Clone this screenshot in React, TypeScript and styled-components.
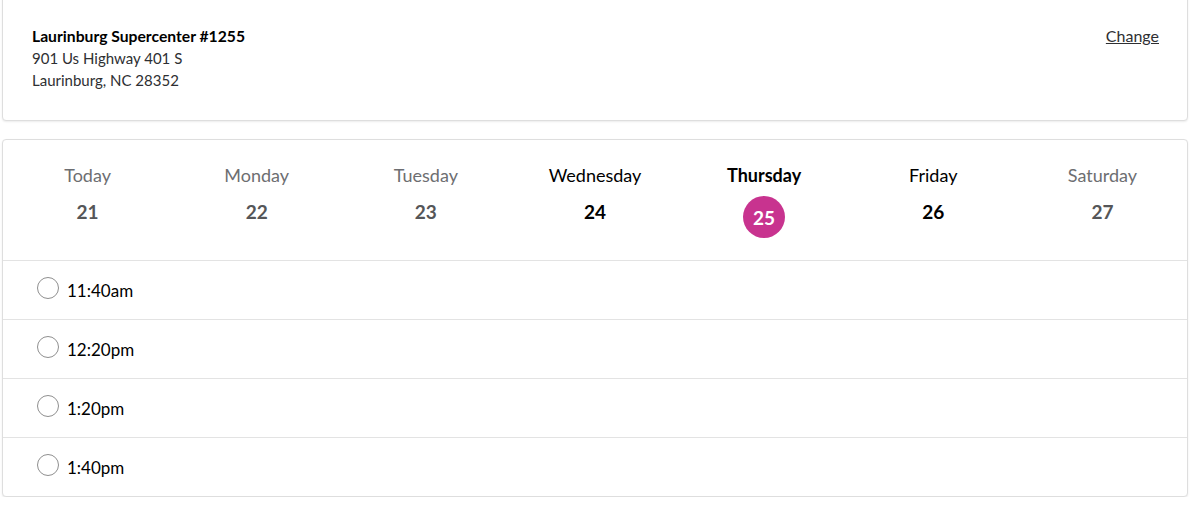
import React from 'react';
import styled, { createGlobalStyle } from 'styled-components';

const GlobalStyle = createGlobalStyle`
  body {
    margin: 0;
    background: #ffffff;
    font-family: Lato, "Noto Sans", sans-serif;
    color: #2e2f32;
  }
`;

const Page = styled.div`
  padding: 0 12px 0 2px;
  display: flex;
  flex-direction: column;
  gap: 18px;
`;

const Card = styled.section`
  background: #fff;
  border: 1px solid #dedede;
  border-radius: 4px;
  box-shadow: 0 1px 2px rgba(0, 0, 0, 0.08);
`;

const StoreCard = styled(Card)`
  margin-top: -8px;
  padding: 32px 28px 29px 29px;
  display: flex;
  justify-content: space-between;
  align-items: flex-start;
`;

const StoreName = styled.div`
  font-weight: 700;
  font-size: 15.7px;
  line-height: 22px;
  color: #000;
`;

const AddressLine = styled.div`
  font-size: 15px;
  line-height: 22px;
  color: #2e2f32;
`;

const ChangeLink = styled.a`
  font-size: 16px;
  line-height: 22px;
  color: #2e2f32;
  text-decoration: underline;
  cursor: pointer;
`;

const DayRow = styled.div`
  display: grid;
  grid-template-columns: repeat(7, 1fr);
  height: 120px;
  border-bottom: 1px solid #e3e3e3;
`;

const DayCell = styled.div`
  display: flex;
  flex-direction: column;
  align-items: center;
  padding-top: 23px;
`;

const DayName = styled.div<{ $state: 'off' | 'on' | 'sel' }>`
  font-size: 18px;
  line-height: 24px;
  font-weight: ${(p) => (p.$state === 'sel' ? 700 : 400)};
  color: ${(p) => (p.$state === 'off' ? '#6d6e71' : '#000')};
`;

const DayNum = styled.div<{ $state: 'off' | 'on' | 'sel' }>`
  margin-top: ${(p) => (p.$state === 'sel' ? '9px' : '13px')};
  width: 42px;
  height: 42px;
  display: flex;
  align-items: ${(p) => (p.$state === 'sel' ? 'center' : 'flex-start')};
  justify-content: center;
  border-radius: 50%;
  font-size: 19px;
  font-weight: 700;
  background: ${(p) => (p.$state === 'sel' ? '#c8338f' : 'transparent')};
  color: ${(p) => (p.$state === 'sel' ? '#fff' : p.$state === 'off' ? '#555658' : '#000')};
`;

const SlotRow = styled.label<{ $last?: boolean }>`
  display: flex;
  align-items: center;
  gap: 8px;
  height: 58px;
  padding-left: 34px;
  border-bottom: ${(p) => (p.$last ? 'none' : '1px solid #e3e3e3')};
  cursor: pointer;
`;

const Radio = styled.span`
  width: 22px;
  height: 22px;
  border: 1.5px solid #8f8f8f;
  border-radius: 50%;
  box-sizing: border-box;
  margin-top: -4px;
`;

const SlotTime = styled.span`
  font-size: 17px;
  color: #000;
`;

const days: { name: string; num: number; state: 'off' | 'on' | 'sel' }[] = [
  { name: 'Today', num: 21, state: 'off' },
  { name: 'Monday', num: 22, state: 'off' },
  { name: 'Tuesday', num: 23, state: 'off' },
  { name: 'Wednesday', num: 24, state: 'on' },
  { name: 'Thursday', num: 25, state: 'sel' },
  { name: 'Friday', num: 26, state: 'on' },
  { name: 'Saturday', num: 27, state: 'off' },
];

const slots = ['11:40am', '12:20pm', '1:20pm', '1:40pm'];

export default function App() {
  return (
    <>
      <GlobalStyle />
      <Page>
        <StoreCard>
          <div>
            <StoreName>Laurinburg Supercenter #1255</StoreName>
            <AddressLine>901 Us Highway 401 S</AddressLine>
            <AddressLine>Laurinburg, NC 28352</AddressLine>
          </div>
          <ChangeLink>Change</ChangeLink>
        </StoreCard>
        <Card>
          <DayRow>
            {days.map((d) => (
              <DayCell key={d.num}>
                <DayName $state={d.state}>{d.name}</DayName>
                <DayNum $state={d.state}>{d.num}</DayNum>
              </DayCell>
            ))}
          </DayRow>
          {slots.map((s, i) => (
            <SlotRow key={s} $last={i === slots.length - 1}>
              <Radio />
              <SlotTime>{s}</SlotTime>
            </SlotRow>
          ))}
        </Card>
      </Page>
    </>
  );
}
